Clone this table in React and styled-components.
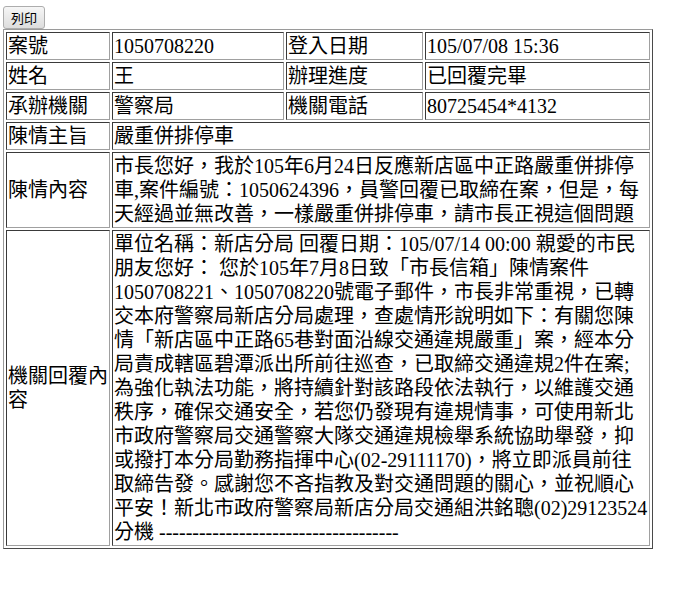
import React from 'react';
import styled, { createGlobalStyle } from 'styled-components';

const GlobalStyle = createGlobalStyle`
  body {
    margin: 0;
    background: #ffffff;
  }
`

const Page = styled.div`
  padding: 6px 0 0 3px;
  font-family: "Liberation Serif", "Noto Sans CJK TC", serif;
  color: #000;
`

const PrintButton = styled.button`
  display: block;
  height: 23px;
  padding: 0 7px;
  font-family: "Noto Sans CJK TC", sans-serif;
  font-size: 13px;
  line-height: 20px;
  color: #000;
  background: linear-gradient(#f6f6f6, #dddddd);
  border: 1px solid #adadad;
  border-radius: 3px;
`

const Table = styled.table`
  width: 650px;
  table-layout: fixed;
  border-collapse: separate;
  border-spacing: 2px;
  border: 1px solid;
  border-color: #9a9a9a #4a4a4a #4a4a4a #9a9a9a;
  font-size: 20px;
  line-height: 24px;
`

const Cell = styled.td`
  padding: 1px;
  border: 1px solid;
  border-color: #3a3a3a #a0a0a0 #a0a0a0 #3a3a3a;
  vertical-align: middle;
  word-break: normal;
`

const info = [
  ['案號', '1050708220', '登入日期', '105/07/08 15:36'],
  ['姓名', '王', '辦理進度', '已回覆完畢'],
  ['承辦機關', '警察局', '機關電話', '80725454*4132'],
];

const details = [
  ['陳情主旨', '嚴重併排停車'],
  ['陳情內容', '市長您好，我於105年6月24日反應新店區中正路嚴重併排停車,案件編號：1050624396，員警回覆已取締在案，但是，每天經過並無改善，一樣嚴重併排停車，請市長正視這個問題'],
  ['機關回覆內容', '單位名稱：新店分局 回覆日期：105/07/14 00:00 親愛的市民朋友您好： 您於105年7月8日致「市長信箱」陳情案件1050708221、1050708220號電子郵件，市長非常重視，已轉交本府警察局新店分局處理，查處情形說明如下：有關您陳情「新店區中正路65巷對面沿線交通違規嚴重」案，經本分局責成轄區碧潭派出所前往巡查，已取締交通違規2件在案;為強化執法功能，將持續針對該路段依法執行，以維護交通秩序，確保交通安全，若您仍發現有違規情事，可使用新北市政府警察局交通警察大隊交通違規檢舉系統協助舉發，抑或撥打本分局勤務指揮中心(02-29111170)，將立即派員前往取締告發。感謝您不吝指教及對交通問題的關心，並祝順心平安！新北市政府警察局新店分局交通組洪銘聰(02)29123524分機 ------------------------------------'],
];

export default function App() {
  return (
    <Page>
      <GlobalStyle />
      <PrintButton>列印</PrintButton>
      <Table>
        <colgroup>
          <col style={{ width: 104 }} />
          <col style={{ width: 172 }} />
          <col style={{ width: 137 }} />
          <col />
        </colgroup>
        <tbody>
          {info.map((row) => (
            <tr key={row[0]}>
              {row.map((text, i) => (
                <Cell key={i}>{text}</Cell>
              ))}
            </tr>
          ))}
          {details.map(([label, text]) => (
            <tr key={label}>
              <Cell>{label}</Cell>
              <Cell colSpan={3}>{text}</Cell>
            </tr>
          ))}
        </tbody>
      </Table>
    </Page>
  );
}
